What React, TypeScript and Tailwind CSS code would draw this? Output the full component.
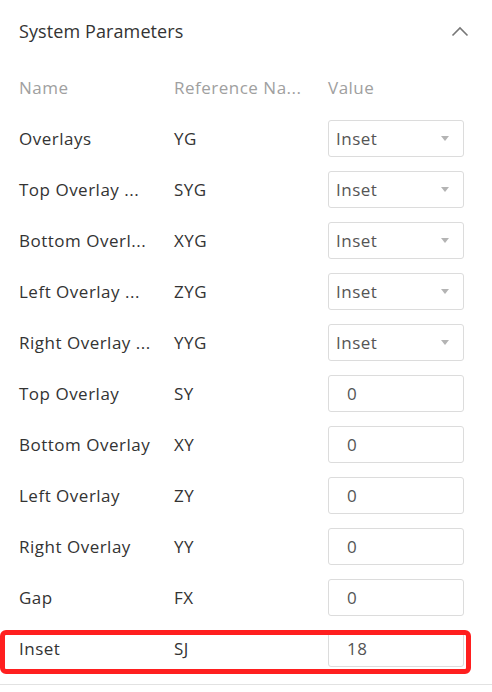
import React from "react";

type Row = { name: string; ref: string; value: string; kind: "select" | "input" };

const rows: Row[] = [
  { name: "Overlays", ref: "YG", value: "Inset", kind: "select" },
  { name: "Top Overlay ...", ref: "SYG", value: "Inset", kind: "select" },
  { name: "Bottom Overl...", ref: "XYG", value: "Inset", kind: "select" },
  { name: "Left Overlay ...", ref: "ZYG", value: "Inset", kind: "select" },
  { name: "Right Overlay ...", ref: "YYG", value: "Inset", kind: "select" },
  { name: "Top Overlay", ref: "SY", value: "0", kind: "input" },
  { name: "Bottom Overlay", ref: "XY", value: "0", kind: "input" },
  { name: "Left Overlay", ref: "ZY", value: "0", kind: "input" },
  { name: "Right Overlay", ref: "YY", value: "0", kind: "input" },
  { name: "Gap", ref: "FX", value: "0", kind: "input" },
  { name: "Inset", ref: "SJ", value: "18", kind: "input" },
];

function ValueCell({ row }: { row: Row }) {
  if (row.kind === "select") {
    return (
      <div className="flex h-[37px] w-[136px] items-center justify-between rounded-[3px] border border-[#dcdcdc] bg-white pl-[7px] pr-[14px] text-[#555]">
        <span>{row.value}</span>
        <svg width="8" height="5" viewBox="0 0 8 5">
          <path d="M0 0 L8 0 L4 5 Z" fill="#b4b4b4" />
        </svg>
      </div>
    );
  }
  return (
    <div className="flex h-[37px] w-[136px] items-center rounded-[3px] border border-[#dcdcdc] bg-white pl-[18px] text-[#555]">
      {row.value}
    </div>
  );
}

export default function App() {
  return (
    <div
      className="w-[492px] h-[692px] bg-white overflow-hidden"
      style={{ fontFamily: '"Open Sans", "Noto Sans", sans-serif' }}
    >
      <div className="border-b border-[#e2e2e2] pb-[10px]">
        <div className="flex h-[62px] items-center justify-between pl-[19px] pr-[23px]">
          <span className="text-[18px] tracking-[0.1px] text-[#333]">System Parameters</span>
          <svg width="18" height="11" viewBox="0 0 18 11">
            <path d="M1.5 9.5 L9 2 L16.5 9.5" fill="none" stroke="#777" strokeWidth="1.6" />
          </svg>
        </div>
        <div className="flex h-[51px] items-center pl-[19px] text-[17px] tracking-[0.5px] text-[#a0a0a0]">
          <span className="w-[155px]">Name</span>
          <span className="w-[154px]">Reference Na...</span>
          <span>Value</span>
        </div>
        {rows.map((row, i) => {
          const last = i === rows.length - 1;
          return (
            <div key={i} className="relative flex h-[51px] items-center pl-[19px] text-[17px] tracking-[0.5px] text-[#333]">
              <span className="w-[155px] whitespace-nowrap">{row.name}</span>
              <span className="w-[154px]">{row.ref}</span>
              <ValueCell row={row} />
              {last && (
                <div className="pointer-events-none absolute left-0 top-[7px] h-[44px] w-[471px] rounded-[6px] border-[5px] border-[#ff1f1f]" />
              )}
            </div>
          );
        })}
      </div>
    </div>
  );
}
